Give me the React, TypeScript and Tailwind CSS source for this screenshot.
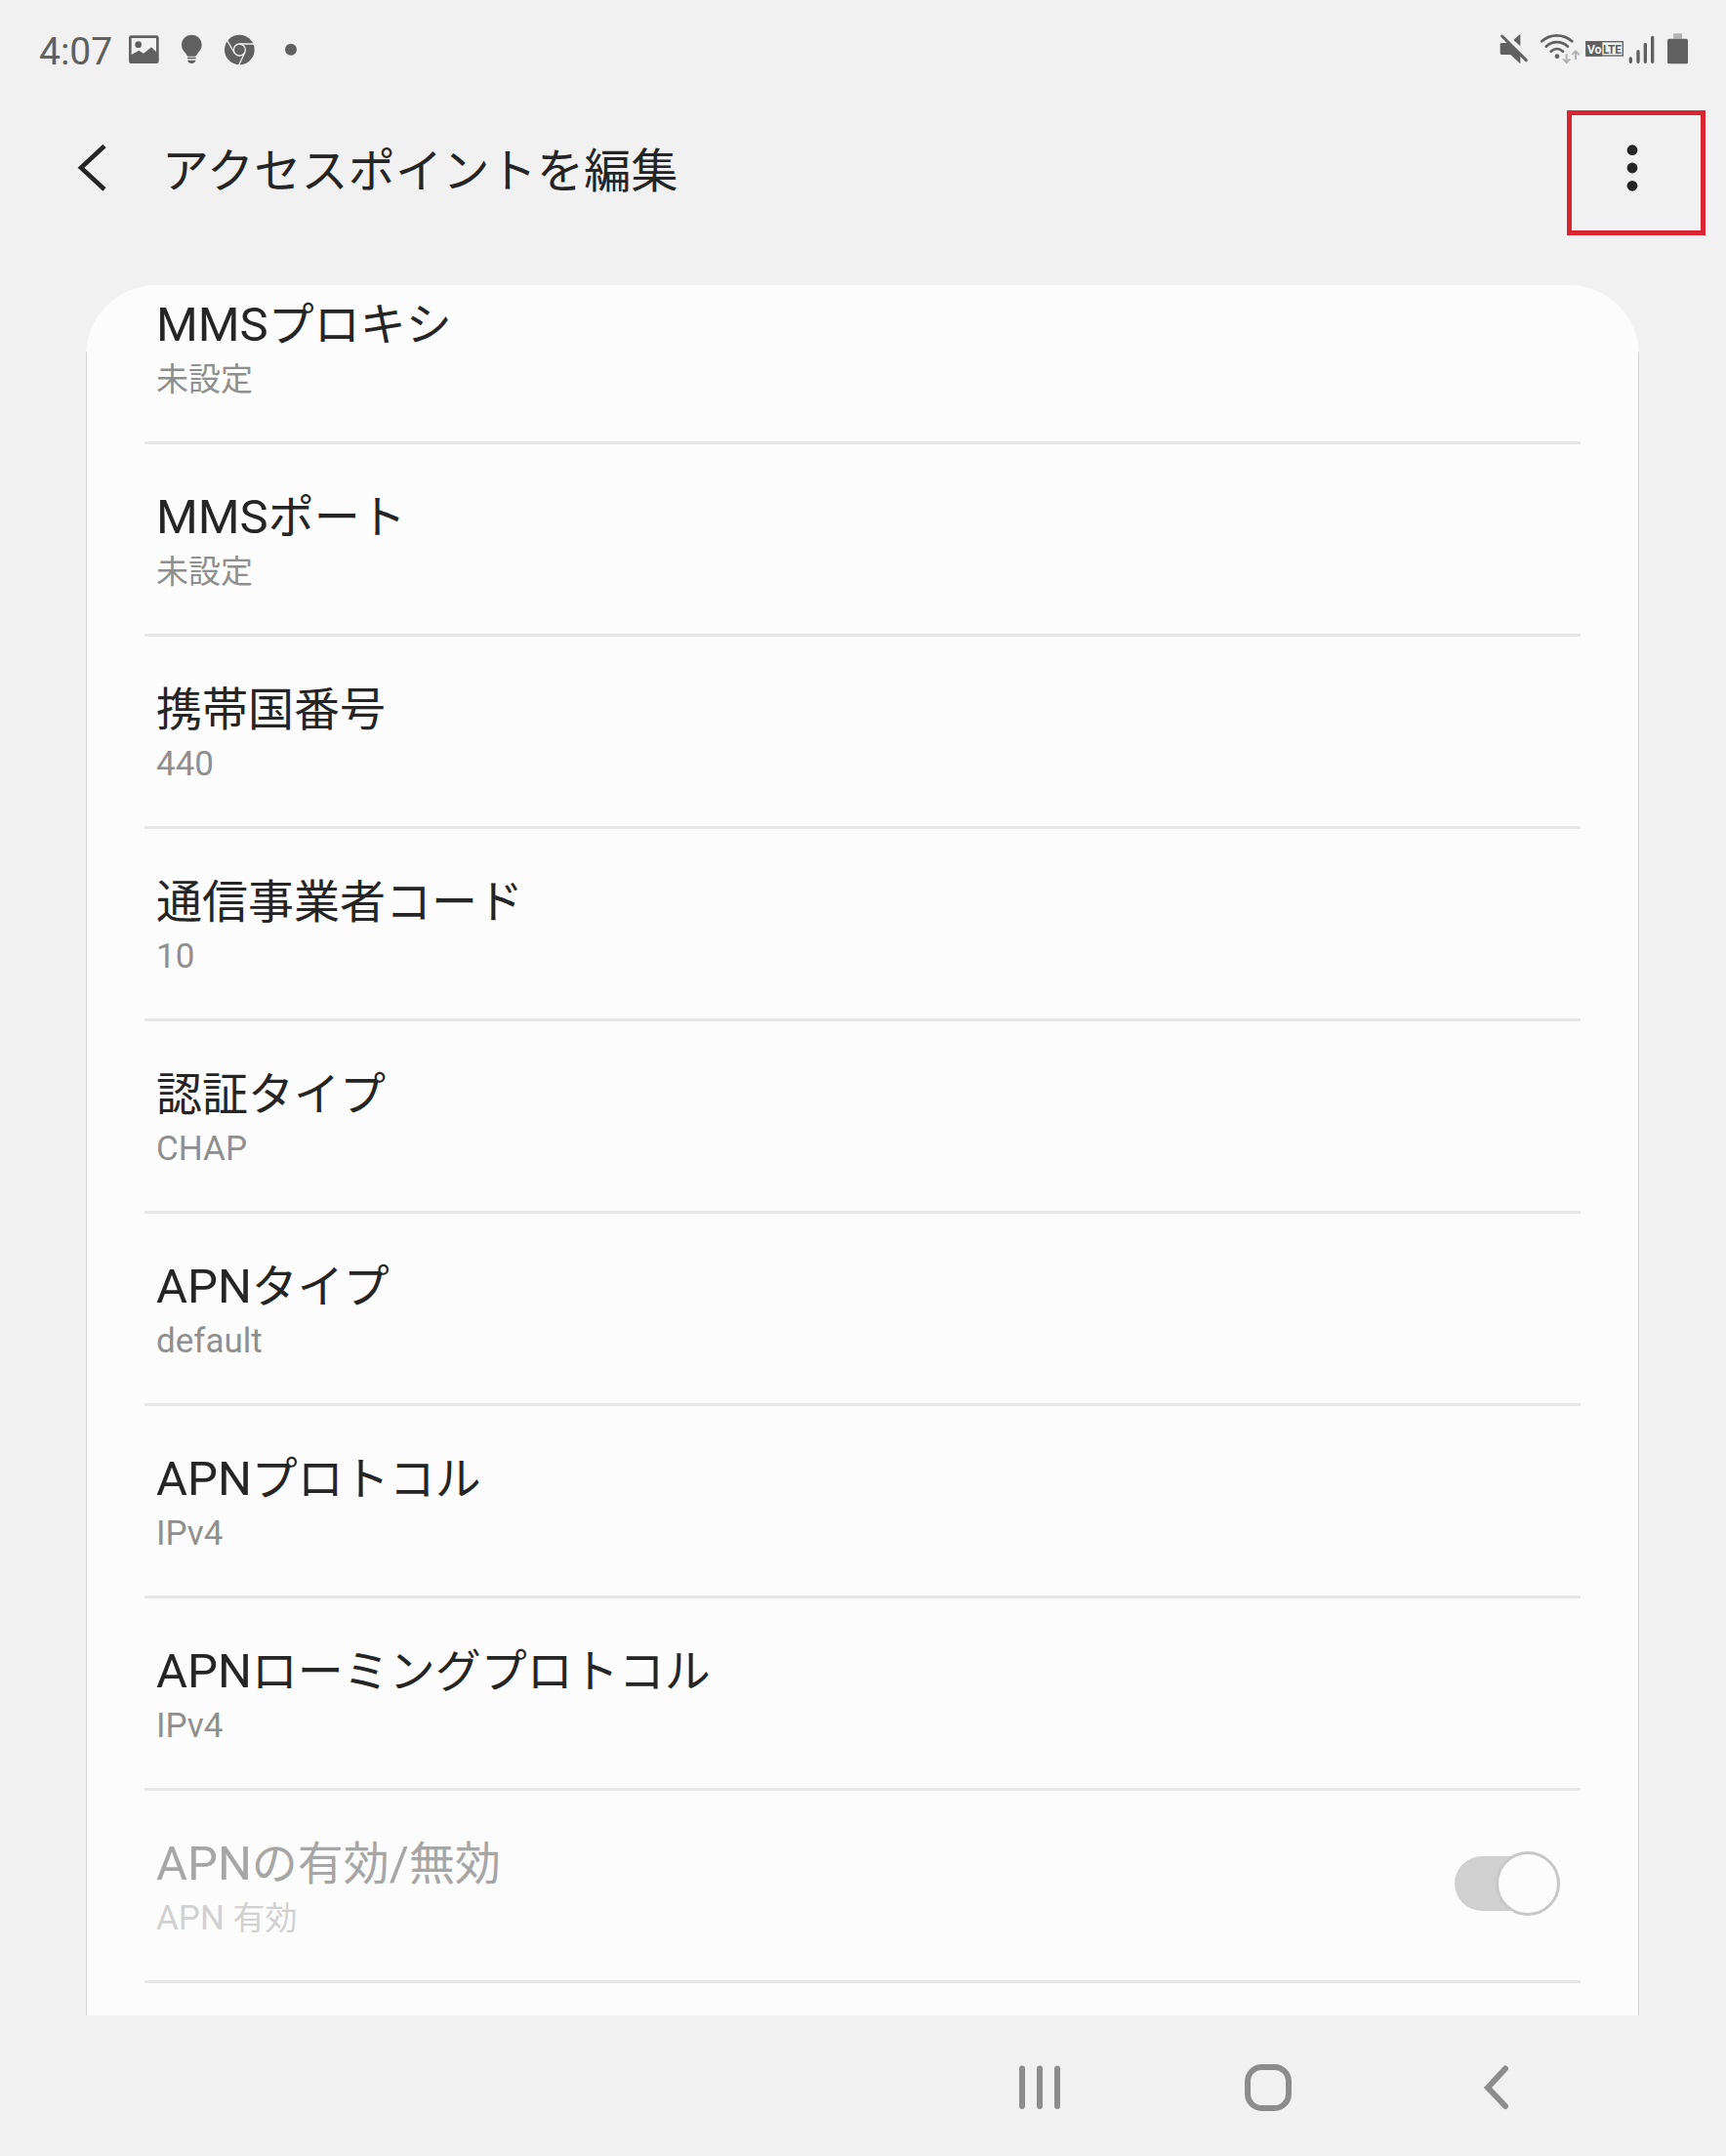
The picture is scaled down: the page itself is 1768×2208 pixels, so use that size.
import { Fragment } from "react";

type Setting = {
  label: string;
  value: string;
  disabled?: boolean;
};

const settings: Setting[] = [
  { label: "MMSプロキシ", value: "未設定" },
  { label: "MMSポート", value: "未設定" },
  { label: "携帯国番号", value: "440" },
  { label: "通信事業者コード", value: "10" },
  { label: "認証タイプ", value: "CHAP" },
  { label: "APNタイプ", value: "default" },
  { label: "APNプロトコル", value: "IPv4" },
  { label: "APNローミングプロトコル", value: "IPv4" },
  { label: "APNの有効/無効", value: "APN 有効", disabled: true },
];

// Latin runs are set slightly larger than the Japanese around them
function MixedText({ text, latin }: { text: string; latin: string }) {
  return (
    <>
      {text.split(/([\x20-\x7e]+)/).map((part, i) =>
        i % 2 ? (
          <span key={i} className={latin}>
            {part}
          </span>
        ) : (
          <Fragment key={i}>{part}</Fragment>
        )
      )}
    </>
  );
}

function NotificationIcons() {
  return (
    <svg width="190" height="36" viewBox="330 40 570 108" fill="#606060">
      {/* Picture */}
      <path
        fillRule="evenodd"
        d="M343 50h78a7 7 0 0 1 7 7v72a7 7 0 0 1-7 7h-78a7 7 0 0 1-7-7V57a7 7 0 0 1 7-7zM344 58v51l23-13 14 9 24-19 15 14V58z"
      />
      <circle cx="365" cy="78" r="10" />
      {/* Bulb */}
      <path d="M529 48c18 0 31 14 31 31 0 12-7 19-12 25-4 5-4 10-8 10h-22c-4 0-4-5-8-10-5-6-12-13-12-25 0-17 13-31 31-31z" />
      <path d="M516 117h26v5h-26zM516 126h26c-2 6-7 10-13 10s-11-4-13-10z" />
      {/* Chrome */}
      <circle cx="676" cy="94" r="46" />
      <g fill="none" stroke="#f1f1f1" strokeWidth="4">
        <circle cx="676" cy="94" r="18" />
        <path d="M676 76h44M660 103L638 65M692 103L674 141" />
      </g>
      <circle cx="834" cy="93" r="18" />
    </svg>
  );
}

function SystemIcons() {
  return (
    <svg width="230" height="70" viewBox="0 0 690 210" fill="#606060">
      {/* Muted speaker */}
      <path d="M112 44v38L91 63zM55 72h20l37 36v28L82 108H55c-3 0-5-2-5-5V77c0-3 2-5 5-5z" />
      <path d="M56 51L130 125" stroke="#606060" strokeWidth="9" strokeLinecap="round" />
      {/* Wifi */}
      <g fill="none" stroke="#606060" strokeWidth="8" strokeLinecap="round">
        <path d="M178 67C204 43 244 43 271 67" />
        <path d="M191 83c19-18 48-18 67 0" />
        <path d="M206 98c11-10 26-10 37 0" />
      </g>
      <circle cx="225" cy="113" r="7" />
      <g fill="none" stroke="#b3b3b3" strokeWidth="6">
        <path d="M254 105v26M243 121l11 11 11-11M282 123V98M271 108l11-11 11 11" />
      </g>
      {/* VoLTE badge */}
      <rect x="315" y="68" width="112" height="43" fill="none" stroke="#606060" strokeWidth="4" />
      <rect x="313" y="66" width="51" height="47" />
      <text x="317" y="104" fill="#f1f1f1" className="font-[Roboto] text-[40px] font-bold" textLength="45" lengthAdjust="spacingAndGlyphs">
        Vo
      </text>
      <text x="366" y="104" className="font-[Roboto] text-[40px] font-bold" textLength="57" lengthAdjust="spacingAndGlyphs">
        LTE
      </text>
      {/* Signal */}
      <g stroke="#606060" strokeWidth="10" strokeLinecap="round">
        <path d="M451 120v10M474 98v32M496 76v54M518 55v75" />
      </g>
      {/* Battery */}
      <path fill="#b3b3b3" d="M585 43h21a3 3 0 0 1 3 3v13h-27V46a3 3 0 0 1 3-3z" />
      <rect x="564" y="59" width="63" height="77" rx="5" />
    </svg>
  );
}

function StatusBar() {
  return (
    <div className="flex h-[90px] items-start justify-between pt-5 pr-[18px] pl-10 text-[#606060]">
      <div className="flex">
        <span className="mt-[10px] w-[90px] text-[39px] leading-[46px]">4:07</span>
        <div className="mt-[13px]">
          <NotificationIcons />
        </div>
      </div>
      <SystemIcons />
    </div>
  );
}

function Header() {
  return (
    <header className="flex h-[202px] items-start pr-[21px] pl-[76px]">
      <button type="button" aria-label="戻る" className="mt-[54px] w-[90px]">
        <svg width="40" height="56" fill="none" stroke="#252525" strokeWidth="4.6">
          <path d="M31 5.500L7 27.700L31 50" />
        </svg>
      </button>
      <h1 className="mt-14 grow text-[48px] leading-[60px] tracking-[0.3px] text-[#252525]">
        アクセスポイントを編集
      </h1>
      <button
        type="button"
        aria-label="その他"
        className="mt-[23px] h-32 w-[142px] border-[5px] border-[#d9252f]"
      >
        <svg width="132" height="118" fill="#252525">
          <circle cx="62" cy="35.700" r="5.400" />
          <circle cx="62" cy="54" r="5.400" />
          <circle cx="62" cy="72.300" r="5.400" />
        </svg>
      </button>
    </header>
  );
}

function Toggle() {
  return (
    <div className="mt-[67px] mr-[21px] flex h-14 w-[108px] items-center justify-end rounded-full bg-linear-to-r from-[#d0d0d0] from-75% to-transparent to-75%">
      <div className="size-[66px] shrink-0 rounded-full border-[3px] border-[#c8c8c8] bg-[#fcfcfc]" />
    </div>
  );
}

function SettingRow({ label, value, disabled }: Setting) {
  return (
    <li className="flex h-[197px] shrink-0 justify-between border-b-[3px] border-[#e6e6e6] pl-3">
      <div className="pt-[47px]">
        <div
          className={`h-[62px] text-[47px] leading-[56px] whitespace-nowrap ${
            disabled ? "text-[#a6a6a6]" : "text-[#252525]"
          }`}
        >
          <MixedText text={label} latin="text-[49px]" />
        </div>
        <div
          className={`h-11 text-[33px] leading-[44px] whitespace-nowrap ${
            disabled ? "text-[#d1d1d1]" : "text-[#8f8f8f]"
          }`}
        >
          <MixedText text={value} latin="text-[35px]" />
        </div>
      </div>
      {disabled && <Toggle />}
    </li>
  );
}

function NavigationBar() {
  return (
    <nav className="flex h-36 items-center justify-end pr-[218px]">
      <svg width="510" height="60" fill="none" stroke="#8c8c8c" strokeWidth="6">
        <path strokeLinecap="round" d="M7 12.500v38.500M25 12.500v38.500M43 12.500v38.500" />
        <rect x="238" y="11" width="42" height="42" rx="14.500" />
        <path strokeLinecap="round" d="M502 12.500L484 32L502 51" />
      </svg>
    </nav>
  );
}

export default function App() {
  return (
    <div
      lang="ja"
      className="flex h-[2208px] w-[1768px] flex-col overflow-hidden bg-[#f1f1f1] font-[Roboto,'Noto_Sans_CJK_JP',sans-serif]"
    >
      <StatusBar />
      <Header />
      <main className="relative mr-[89px] ml-[88px] h-[1772px] overflow-hidden rounded-t-[72px] bg-[#fcfcfc] px-[60px]">
        <ul className="-mt-[34px] flex flex-col">
          {settings.map((setting) => (
            <SettingRow key={setting.label} {...setting} />
          ))}
        </ul>
        <div className="absolute inset-x-0 top-[68px] bottom-0 border-x border-[#d2d2d2]" />
      </main>
      <NavigationBar />
    </div>
  );
}
